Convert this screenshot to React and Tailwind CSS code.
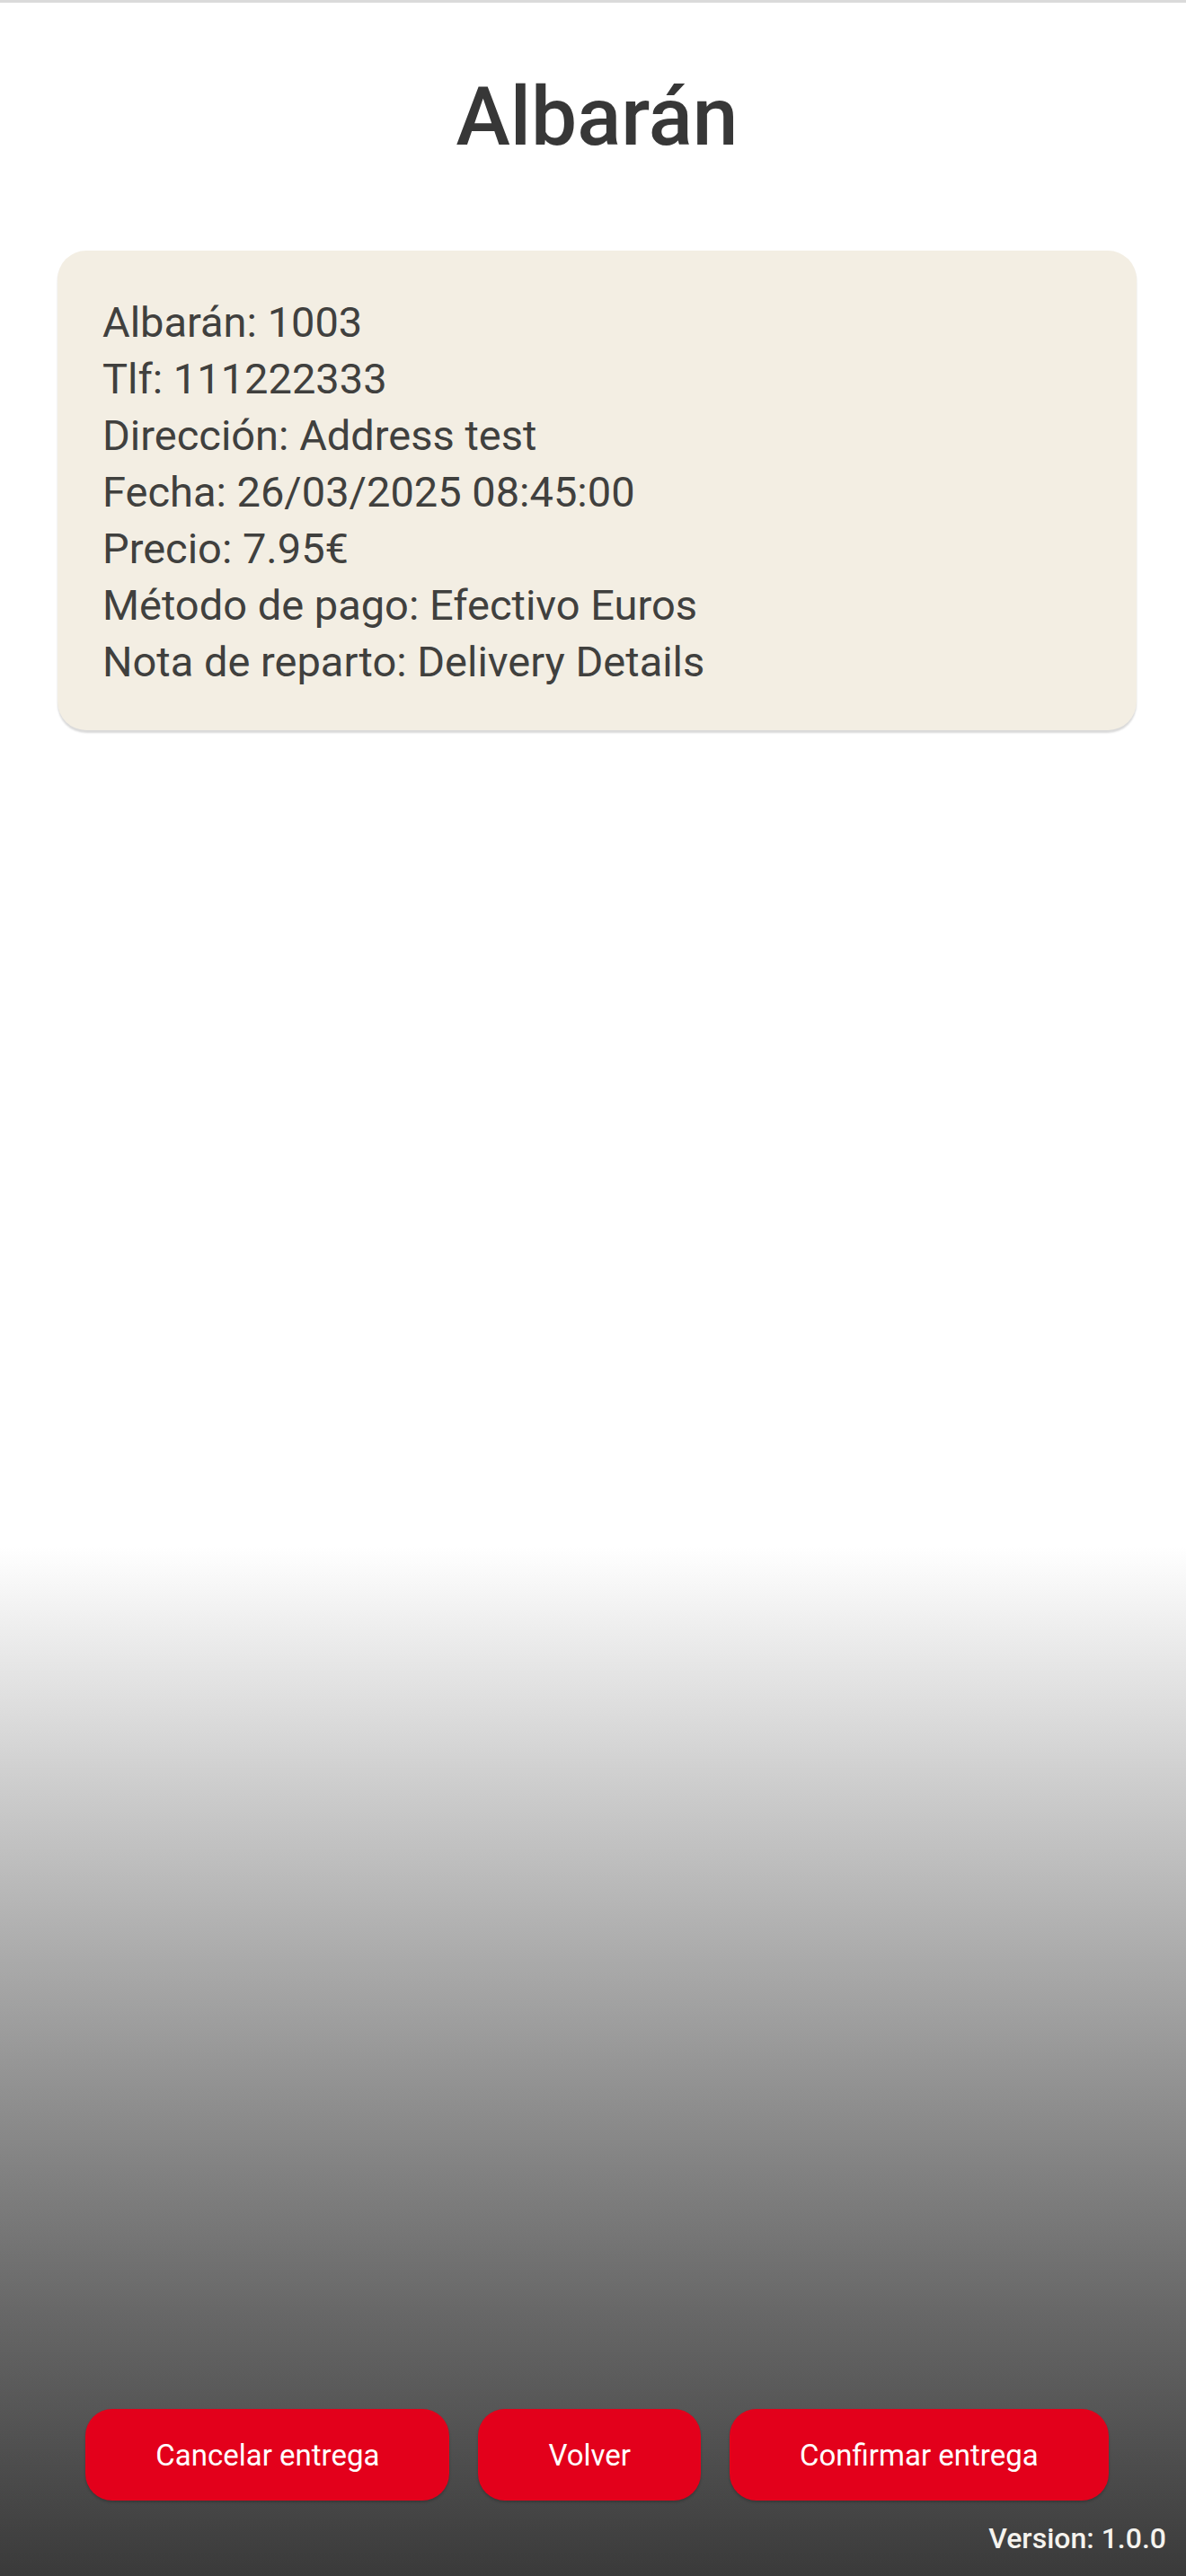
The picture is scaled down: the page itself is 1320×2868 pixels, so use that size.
import React from 'react';

const delivery = [
  ['Albarán', '1003'],
  ['Tlf', '111222333'],
  ['Dirección', 'Address test'],
  ['Fecha', '26/03/2025 08:45:00'],
  ['Precio', '7.95€'],
  ['Método de pago', 'Efectivo Euros'],
  ['Nota de reparto', 'Delivery Details'],
];

function ActionButton({ children }) {
  return (
    <button type="button" className="rounded-[30px] bg-[#e3001b] px-[78px] pt-8 pb-[30px] text-[33px] leading-10 text-white shadow-[0_2px_3px_rgba(0,0,0,0.2)]">
      {children}
    </button>
  );
}

export default function App() {
  return (
    <div className="flex min-h-screen flex-col border-t-[3px] border-[#dadada] bg-linear-to-b from-white from-60% to-[#3a3a3a] font-[Roboto,sans-serif]">
      <div className="flex flex-1 flex-col pt-[75px] pr-[55px] pl-16">
        <h1 className="text-center text-[91px] leading-[104px] font-medium text-[#373737]">Albarán</h1>

        <main className="mt-[97px] flex-1">
          <section className="rounded-[32px] bg-[#f3eee3] px-[50px] pt-[48px] pb-[45px] text-[47px] leading-[63px] text-[#40403e] shadow-[0_3px_2px_rgba(0,0,0,0.15)]">
            {delivery.map(([label, value]) => (
              <p key={label}>{label}: {value}</p>
            ))}
          </section>
        </main>

        <div className="flex flex-wrap justify-center gap-8">
          <ActionButton>Cancelar entrega</ActionButton>
          <ActionButton>Volver</ActionButton>
          <ActionButton>Confirmar entrega</ActionButton>
        </div>
      </div>
      <footer className="px-[22px] pt-[22px] pb-[22px] text-right text-[32px] leading-10 font-medium text-[#f5f3ee]">Version: 1.0.0</footer>
    </div>
  );
}
